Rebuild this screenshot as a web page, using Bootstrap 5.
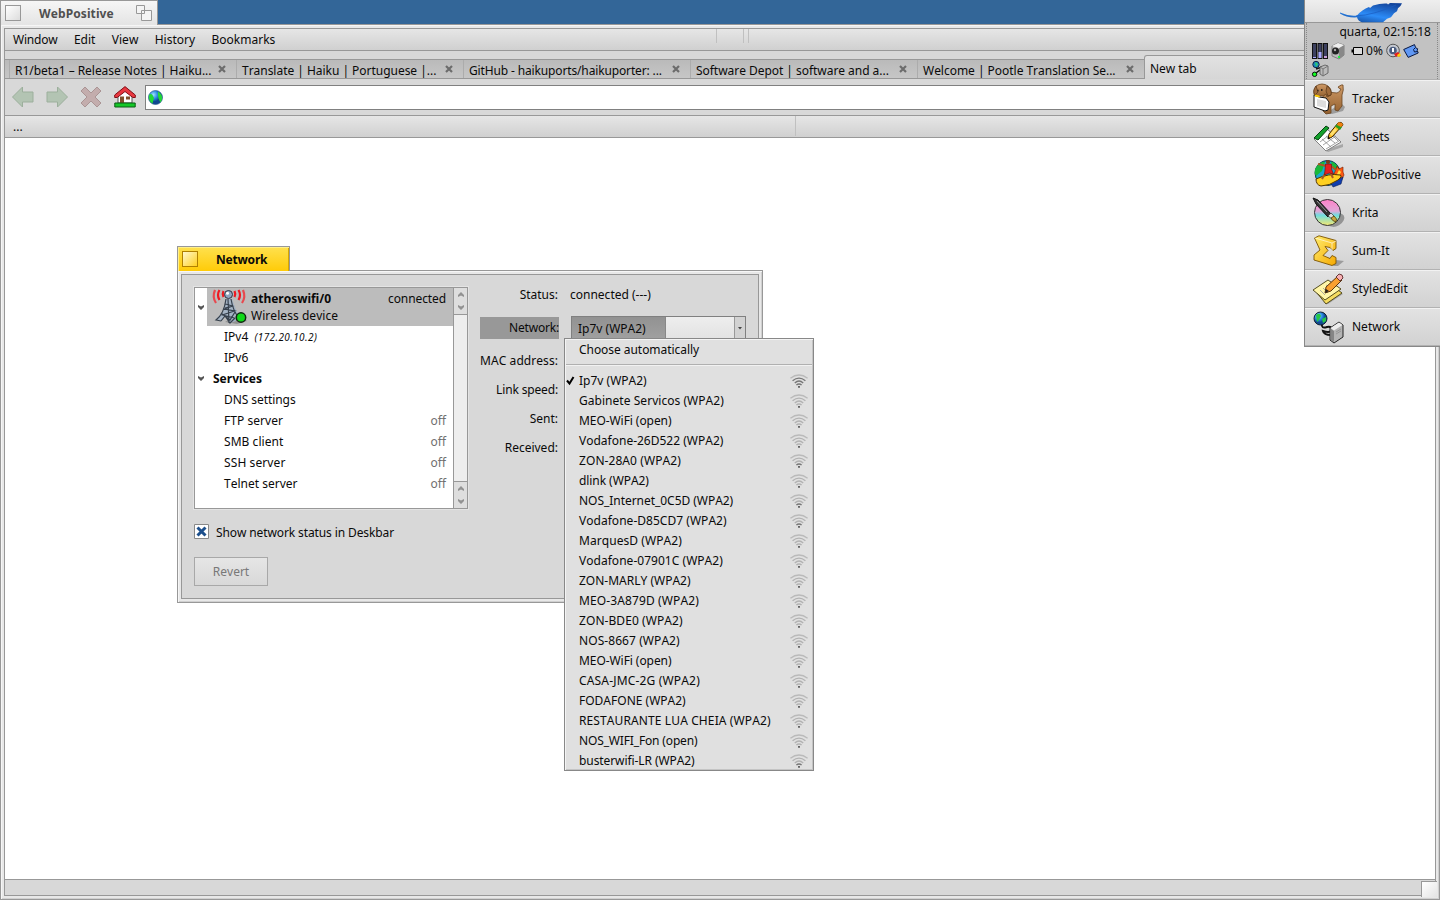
<!DOCTYPE html>
<html lang="en">
<head>
<meta charset="utf-8">
<title>Haiku desktop</title>
<link href="https://cdn.jsdelivr.net/npm/bootstrap@5.3.0/dist/css/bootstrap.min.css" rel="stylesheet">
<style>
body{width:1440px;height:900px;overflow:hidden;background:#336698;font:12px/20px "Noto Sans",sans-serif;color:#0a0a0a;position:relative;white-space:nowrap;font-kerning:none}
svg{display:block;flex:none;overflow:visible}
.line-t{border-top:1px solid #989898}.line-b{border-bottom:1px solid #989898}
.grad{background:linear-gradient(#e6e6e6,#d0d0d0)}
.win{position:absolute}
.frame{background:#e8e8e8;border:1px solid #989898;box-shadow:inset 1px 1px #f6f6f6,inset -1px -1px #d0d0d0;padding:3px}
.wp-tab{width:158px;height:25px;background:linear-gradient(#f6f6f6,#e4e4e4);border:1px solid #989898;border-bottom:0;z-index:1;color:#505050;font-weight:700}
.tbox{width:16px;height:16px;border:1px solid #989898;background:linear-gradient(135deg,#fff,#dcdcdc)}
.menu-bar{height:22px;gap:16.4px;padding-left:8px;position:relative}
.ghost{position:absolute;top:0;width:1px;height:14px;background:#c0c0c0}
.tabs{height:28px;background:#d8d8d8;padding-top:8px}
.tabstrip{height:20px;background:linear-gradient(#bababa,#c6c6c6);border-top:1px solid #989898;border-bottom:1px solid #989898;padding-left:4px}
.wtab{flex:none;width:227px;border-left:1px solid #acacac;padding:1px 9px 0 5px}
.wtab svg{margin-top:3px}
.wtab.active{width:300px;height:25px;margin-top:-5px;background:linear-gradient(#e2e2e2,#d6d6d6);border:1px solid #989898;border-bottom:0;border-radius:3px 0 0;padding:3px 5px 0;align-self:flex-start}
.toolrow{height:37px;background:#d8d8d8;padding-left:7px}
.url{height:25px;border:1px solid #808080;border-right:0;background:#fff;margin-left:9px;padding-left:2px;margin-top:1px}
.bookbar{height:22px;padding-left:8px;position:relative}
.net-tab{width:113px;height:25px;background:linear-gradient(#ffe14e,#ffcb08);border:1px solid #989898;border-bottom:0;box-shadow:inset 1px 1px #fff08a,inset -1px 0 #d8a800;z-index:1;font-weight:700}
.net-tab .tbox{border-color:#b08000;background:linear-gradient(135deg,#fff8d0,#ffd020)}
.tree{width:274px;height:222px;border:1px solid #989898;background:#fff;box-shadow:0 0 0 1px #e4e4e4}
.device{height:38px;background:#bcbcbc;line-height:17px}
.node{height:21px;line-height:22px;padding:0 7px 0 29px}
.off{color:#707070}
.sbar{width:14px;border-left:1px solid #989898;background:#eee}
.sbtn{height:27px;background:#dedede}
.popup{position:absolute;left:564px;top:338px;width:250px;height:433px;background:#e0e0e0;border:1px solid #888;box-shadow:inset 1px 1px #f4f4f4,inset -1px -1px #c4c4c4;z-index:5}
.item{height:20px;padding:0 5px 0 14px;position:relative}
.item>svg:last-child{margin-top:3px}
.item .tick{position:absolute;left:1px;top:5px}
.bar-sep{border-top:1px solid #b0b0b0;border-bottom:1px solid #f2f2f2;margin:4px 1px 5px}
.lbl{width:79px;text-align:right}
.dd{width:175px;height:24px;border:1px solid #808080;background:linear-gradient(#eee,#e2e2e2)}
.revert{width:74px;height:29px;border:1px solid #a8a8a8;background:linear-gradient(#e6e6e6,#d8d8d8);color:#787878}
.deskbar{position:absolute;left:1304px;top:0;width:137px;height:347px;border-left:1px solid #888;border-bottom:1px solid #888;z-index:6;background:#d8d8d8}
.leaf{height:23px;background:linear-gradient(#eee,#dcdcdc);border-bottom:1px solid #989898;padding-left:34px}
.tray{height:57px;background:#c2c2c2;border-bottom:1px solid #b0b0b0}
.dots{width:1px;border-left:1px dotted #888}
.app{height:38px;border-top:1px solid #f2f2f2;border-bottom:1px solid #b2b2b2;padding-left:8px;gap:7px;background:linear-gradient(#e2e2e2,#d2d2d2)}
</style>
</head>
<body>
<svg width="0" height="0" class="position-absolute">
<defs>
<linearGradient id="gold" x2="1" y2="1"><stop stop-color="#ffee70"/><stop offset="1" stop-color="#f5a800"/></linearGradient>
<linearGradient id="fur" x2="0" y2="1"><stop stop-color="#cf9a66"/><stop offset="1" stop-color="#93602f"/></linearGradient>
<linearGradient id="kr" x2="0" y2="1"><stop stop-color="#ff80c8"/><stop offset=".45" stop-color="#e0a8d8"/><stop offset=".6" stop-color="#70dce0"/><stop offset="1" stop-color="#f4e870"/></linearGradient>
<radialGradient id="sea" cx=".35" cy=".3"><stop stop-color="#a0e0ff"/><stop offset=".6" stop-color="#2888e0"/><stop offset="1" stop-color="#104890"/></radialGradient>
<linearGradient id="lf" x1=".2" y1="1" x2=".8" y2="0"><stop stop-color="#164c9c"/><stop offset=".4" stop-color="#2c8cf8"/><stop offset="1" stop-color="#12439a"/></linearGradient>
<symbol id="wifi" viewBox="0 0 18 14" fill="none" stroke-width="1.4"><path d="M.4 4.200Q9-2.200 17.600 4.200" stroke="#bababa"/><path d="M2.600 6.700Q9 1.500 15.400 6.700M4.800 9Q9 5.200 13.200 9" stroke="var(--a,#b2b2b2)"/><path d="M6.400 11Q9 9 11.600 11" stroke="var(--b,#b2b2b2)"/><path d="M8 12.900h2" stroke="#666" stroke-width="1.600"/></symbol>
<symbol id="x" viewBox="0 0 10 10"><path d="M2 2l6 6M8 2L2 8" stroke="#6c6c6c" stroke-width="2.2"/></symbol>
<symbol id="dn" viewBox="0 0 8 7"><path d="M1 1l3 1.500L7 1v2L4 6 1 3z" fill="currentColor"/></symbol>
<symbol id="up" viewBox="0 0 8 7"><path d="M1 6l3-1.500L7 6V4L4 1 1 4z" fill="currentColor"/></symbol>
<symbol id="globe" viewBox="0 0 16 16"><circle cx="7.500" cy="7.500" r="7" fill="url(#sea)" stroke="#306090" stroke-width=".7"/><path d="M1 5q2-2 3.500 0l1.500 3-1.500 5.500Q0 11 1 5M10 1.500q5 3 4 8l-1.500 3q-3-4-2.500-11z" fill="#22d838"/></symbol>
</defs>
</svg>

<!-- WebPositive browser window -->
<div class="win wp-tab d-flex align-items-center" style="left:0;top:0"><span class="tbox ms-1"></span><span style="margin-left:18px;padding-top:2px;letter-spacing:.1px">WebPositive</span>
<svg width="16" height="16" style="margin-left:22px" fill="#f4f4f4" stroke="#989898"><path d="M5.500 5.500h10v10h-10zM.5.5h8v8h-8z"/></svg></div>
<main class="win frame d-flex flex-column" style="left:0;top:24px;width:1440px;height:876px">
<div class="d-flex flex-column flex-grow-1" style="border:1px solid #989898">
<nav class="menu-bar grad d-flex align-items-center line-b"><span style="letter-spacing:-.2px">Window</span><span>Edit</span><span>View</span><span>History</span><span>Bookmarks</span><i class="ghost" style="left:711px"></i><i class="ghost" style="left:738px"></i><i class="ghost" style="left:743px"></i></nav>
<div class="tabs">
<div class="tabstrip d-flex">
<div class="wtab d-flex justify-content-between"><span style="letter-spacing:-.04px">R1/beta1 – Release Notes | Haiku...</span><svg width="10" height="10"><use href="#x"/></svg></div>
<div class="wtab d-flex justify-content-between"><span style="letter-spacing:-.03px">Translate | Haiku | Portuguese |...</span><svg width="10" height="10"><use href="#x"/></svg></div>
<div class="wtab d-flex justify-content-between"><span style="letter-spacing:-.14px">GitHub - haikuports/haikuporter: ...</span><svg width="10" height="10"><use href="#x"/></svg></div>
<div class="wtab d-flex justify-content-between"><span style="letter-spacing:-.04px">Software Depot | software and a...</span><svg width="10" height="10"><use href="#x"/></svg></div>
<div class="wtab d-flex justify-content-between"><span style="letter-spacing:-.03px">Welcome | Pootle Translation Se...</span><svg width="10" height="10"><use href="#x"/></svg></div>
<div class="wtab active" style="letter-spacing:-.05px">New tab</div>
</div></div>
<div class="toolrow d-flex align-items-center line-b">
<svg width="22" height="22" fill="#b3c4b3" stroke="#9caf9c"><path d="M.500 11L10.500 1v5H21v10H10.500v5z"/></svg>
<svg width="22" height="22" style="margin-left:12px" fill="#b3c4b3" stroke="#9caf9c"><path d="M21.500 11l-10-10v5H1v10h10.500v5z"/></svg>
<svg width="22" height="22" style="margin-left:12px" fill="#c3adad" stroke="#aa9494"><path d="M5 1l6 6 6-6 4 4-6 6 6 6-4 4-6-6-6 6-4-4 6-6-6-6z"/></svg>
<svg width="22" height="22" style="margin-left:12px"><path d="M4 9l7-6 7 6v8H4z" fill="#fff" stroke="#555"/><path d="M6 10.500h4V17H6z" fill="#80502c"/><path d="M12 10.500h4v3h-4z" fill="#80502c"/><path d="M.7 9L11 .6 21.300 9v2.500h-2.500L11 5.500 3.200 11.500H.7z" fill="#e83840" stroke="#801018"/><path d="M.8 17h20.400v4H.8z" fill="#14c828" stroke="#0a5c14"/></svg>
<div class="url flex-grow-1 d-flex align-items-center"><svg width="16" height="16"><use href="#globe"/></svg></div>
</div>
<div class="bookbar grad line-b d-flex align-items-center">...<i class="ghost" style="left:790px;height:20px;top:0"></i></div>
<div class="flex-grow-1 bg-white line-b"></div>
<div style="height:15px;background:#d8d8d8"></div>
</div>
</main>
<div class="win" style="left:1421px;top:881px;width:16px;height:16px;background:linear-gradient(135deg,#fff,#e4e4e4);border-left:1px solid #989898;border-top:1px solid #989898"></div>

<!-- Network preferences window -->
<div class="win net-tab d-flex align-items-center" style="left:177px;top:246px"><span class="tbox ms-1"></span><span style="margin-left:18px;padding-top:2px;letter-spacing:-.2px">Network</span></div>
<section class="win frame d-flex" style="left:177px;top:270px;width:586px;height:333px">
<div class="d-flex flex-grow-1" style="border:1px solid #989898;background:#d8d8d8;padding:12px 12px 0">
<div>
<div class="tree d-flex">
<div class="flex-grow-1">
<div class="d-flex"><div style="width:12px;padding:16px 0 0 2px;color:#555"><svg width="8" height="7"><use href="#dn"/></svg></div>
<div class="device flex-grow-1 d-flex" style="padding:2px 7px 0 6px">
<svg width="33" height="34"><path d="M12 32l14-8 8 7-10 3z" fill="#777" opacity=".6"/><g fill="none" stroke="#f01820" stroke-width="2.200"><path d="M10.500 1q-1.500 3 0 6M6.500 0q-3 5 0 10"/><path d="M2 0q-3 7 1 13" stroke="#e8484e"/><path d="M21.500 1q1.500 3 0 6M25.500 0q3 5 0 10"/><path d="M30 0q3 7-1 13" stroke="#e8484e"/></g><path d="M13 9L10 22 3 29l5 2 4-5 5 7 6-2-1-6 4 1-4-9-3-8z" fill="#a4b3c4"/><path d="M13 9Q11 24 3 30l5 1M15 9l1 24M18 9q2 12 8 19M12.500 14l7 2-8 3 10 2-12 4 12 3M12 18l8-2M8 23l9 7 5-8M8 31l4-5 5 7 5-5" fill="none" stroke="#36404c" stroke-width="1.200"/><circle cx="15.500" cy="4.500" r="4" fill="#8fa6bf" stroke="#334"/><circle cx="14.500" cy="3.300" r="1.500" fill="#fff"/><circle cx="28" cy="27.500" r="4.700" fill="#10d818" stroke="#102810" stroke-width="1.500"/></svg>
<div class="flex-grow-1" style="margin-left:5px"><div class="d-flex justify-content-between"><b>atheroswifi/0</b><span style="letter-spacing:-.1px">connected</span></div><div style="letter-spacing:.05px">Wireless device</div></div>
</div></div>
<div class="node">IPv4 <i style="font-size:10px;margin-left:3px;letter-spacing:.4px">(172.20.10.2)</i></div>
<div class="node">IPv6</div>
<div class="node d-flex align-items-center" style="padding-left:2px"><svg width="8" height="7" style="color:#555"><use href="#dn"/></svg><b style="margin-left:8px;line-height:20px">Services</b></div>
<div class="node" style="letter-spacing:-.07px">DNS settings</div>
<div class="node d-flex justify-content-between"><span style="letter-spacing:.05px">FTP server</span><span class="off">off</span></div>
<div class="node d-flex justify-content-between"><span style="letter-spacing:.05px">SMB client</span><span class="off">off</span></div>
<div class="node d-flex justify-content-between"><span style="letter-spacing:.1px">SSH server</span><span class="off">off</span></div>
<div class="node d-flex justify-content-between"><span>Telnet server</span><span class="off">off</span></div>
</div>
<div class="sbar d-flex flex-column justify-content-between" style="color:#929292">
<div class="sbtn line-b d-flex flex-column align-items-center justify-content-around"><svg width="8" height="7"><use href="#up"/></svg><svg width="8" height="7"><use href="#dn"/></svg></div>
<div class="sbtn line-t d-flex flex-column align-items-center justify-content-around"><svg width="8" height="7"><use href="#up"/></svg><svg width="8" height="7"><use href="#dn"/></svg></div>
</div>
</div>
<div class="d-flex align-items-start" style="margin-top:14px"><svg width="15" height="15" style="margin-top:1px"><path d="M.5.5h14v14H.5z" fill="#fff" stroke="#888"/><path d="M3.500 3.500l8 8m0-8l-8 8" stroke="#1c4f8c" stroke-width="3"/></svg><span style="margin-left:7px;letter-spacing:-.11px">Show network status in Deskbar</span></div>
<div class="revert d-flex align-items-center justify-content-center" style="margin-top:14px">Revert</div>
</div>
<div style="margin-left:12px">
<div class="d-flex" style="margin-top:-2px"><div class="lbl" style="padding-right:1px">Status:</div><div style="margin-left:11px">connected (---)</div></div>
<div class="d-flex" style="margin-top:11px"><div class="lbl" style="background:#989898;height:22px;line-height:22px;margin-top:1px;letter-spacing:-.2px">Network:</div><div class="dd d-flex" style="margin-left:12px"><div style="width:94px;background:linear-gradient(#929292,#a0a0a0);border-right:1px solid #888;padding:2px 0 0 6px">Ip7v (WPA2)</div><div class="flex-grow-1"></div><div class="d-flex align-items-center justify-content-center" style="width:11px;border-left:1px solid #999;background:#d2d2d2"><svg width="4" height="3"><path d="M0 0h4L2 2.500z" fill="#444"/></svg></div></div></div>
<div class="lbl" style="margin-top:11px;padding-right:1px;letter-spacing:.06px">MAC address:</div>
<div class="lbl" style="margin-top:9px;padding-right:1px;letter-spacing:-.15px">Link speed:</div>
<div class="lbl" style="margin-top:9px;padding-right:1px">Sent:</div>
<div class="lbl" style="margin-top:9px;padding-right:1px">Received:</div>
</div>
</div>
</section>

<!-- Wireless network menu -->
<div class="popup">
<div class="item" style="margin-top:1px;letter-spacing:-.05px">Choose automatically</div>
<div class="bar-sep"></div>
<div id="networks"></div>
</div>

<!-- Deskbar -->
<aside class="deskbar">
<div class="leaf"><svg width="66" height="22"><path d="M1 12.500q9 4 17 3 5-6 12-8.500l1 1 3-2.500q8-2.500 14-2l1 1 2-1.500q6 0 12 .3-1 3-4 5l-1 3-3 2-3 4-4 1.500-4 3.500H23q-4-1-5-5Q8 18 1 13.500z" fill="url(#lf)"/><path d="M17 16q18-1 40-11" stroke="#1a5cc0" stroke-width=".7" fill="none"/></svg></div>
<div class="tray d-flex"><div class="dots" style="margin-left:1px"></div>
<div class="flex-grow-1" style="padding-left:5px">
<div class="text-end" style="height:19px;line-height:18px;padding-right:6px">quarta, 02:15:18</div>
<div class="d-flex align-items-center" style="height:18px">
<svg width="16" height="16"><path d="M0 0h5v16H0zM5.500 0h5v16h-5zM11 0h5v16h-5z" fill="#111"/><path d="M1 1h3v14H1zM6.500 1h3v14h-3zM12 1h3v14h-3z" fill="#3c4060"/><path d="M6.500 9h3v6h-3zM1 14h3v1H1z" fill="#a8a8ff"/><path d="M12 13h3v2h-3z" fill="#c8a0d8"/></svg>
<svg width="14" height="16" style="margin-left:3px"><path d="M1 3l6-3 6 2v10l-5 4-7-3z" fill="#bbb" stroke="#666" stroke-width=".7"/><path d="M8 5l5-3v10l-5 4z" fill="#888"/><path d="M1 3l6-3 6 2-5 3z" fill="#eee"/><circle cx="4.500" cy="8" r="3.500" fill="#222"/><circle cx="4" cy="7" r="1.200" fill="#aaa"/><path d="M7 13h2v2H7z" fill="#2e4"/></svg>
<svg width="12" height="8" style="margin-left:6px"><path d="M2.500.5h9v7h-9z" fill="#ddd" stroke="#000"/><path d="M.5 2.500h1.500v3H.5z"/></svg>
<span style="margin-left:3px;letter-spacing:.1px">0%</span>
<svg width="16" height="16" style="margin-left:3px"><path d="M4 2h8l2 12H5z" fill="#999"/><circle cx="7" cy="7.500" r="6.300" fill="#c4c8d0" stroke="#555"/><circle cx="7" cy="7.500" r="3.800" fill="#4b5d80"/><path d="M6 5h2v4H6z" fill="#fff"/><path d="M8 11l4-2 2 2-4 3z" fill="#e02020"/><path d="M11 12l3-2 1 3-3 1z" fill="#fc0"/></svg>
<svg width="16" height="14" style="margin-left:1px"><path d="M.700 5.500L11.500.6l1.200 3.200 2 1-.5 1.500 1 2.700-10 4.400z" fill="#6098f4" stroke="#0a1840"/><path d="M12 4l-1.500 1.500 1 2.500 3-.5" fill="none" stroke="#0a1840"/></svg>
</div>
<svg width="16" height="16" style="margin-top:1px"><path d="M4 8l6-2M4 12l4-3" stroke="#111" stroke-width="1.500"/><circle cx="4" cy="3.500" r="3.200" fill="#188ac0" stroke="#124"/><path d="M3 1l3 2-2 3z" fill="#3c6"/><path d="M8 6l5-2 3 1v7l-5 3-3-2z" fill="#bbb" stroke="#555" stroke-width=".8"/><path d="M8 6l3 2v7M11 8l5-3" stroke="#777" fill="none"/><circle cx="2.600" cy="13.300" r="2.200" fill="#1f2" stroke="#111"/></svg>
</div><div class="dots" style="margin-right:3px"></div></div>
<div class="app d-flex align-items-center"><svg width="32" height="32"><path d="M12 31l16-11 4 4-2 4-11 3z" fill="#777" opacity=".6"/><path d="M14 9l10 1q3-1 4-4-2 0-3-2 4-3 5-2 1 5-1 10v11l-4 5-3-1v-6l-4 2v7l-5 1-3-3 1-9-3-3z" fill="url(#fur)" stroke="#6a4420" stroke-width=".8"/><path d="M3 3q6-4 12 0 4 3 3 9l-4 2-1-3-3 2H5l-2 1Q0 12 1 7z" fill="url(#fur)" stroke="#6a4420" stroke-width=".8"/><path d="M3 3Q-1 8 2 12l3-3zM14 3q5 3 4 9l-3 1-2-5z" fill="#a06c3c" stroke="#4a2c10" stroke-width=".6"/><path d="M8 7h1.500M4.500 7.500h1" stroke="#111" stroke-width="1.500"/><path d="M1 12l5 2 7 1 3 4-1 8-3 1-11-4z" fill="#fff" stroke="#111"/><path d="M1.500 11.500l5 1 .5 2-5-1z" fill="#fc0"/><path d="M4 16l9 2v7l-9-2z" fill="#ddd"/></svg>Tracker</div>
<div class="app d-flex align-items-center"><svg width="32" height="32"><path d="M12 29l18-6v3l-15 5z" fill="#777" opacity=".5"/><path d="M1 18L12 6l16 15-15 9z" fill="#fff" stroke="#666" stroke-width=".8"/><path d="M1 17L13 5l3 2L5 19z" fill="#14a02c" stroke="#064010"/><path d="M7 21l13-10M10 24l13-9M13 28l13-8M9 18l9 8M13 15l9 7M17 12l8 8" stroke="#8c8c8c" stroke-width=".8" fill="none"/><path d="M15 18l1-5L25 2q4-2 5 2L19 16z" fill="#ffc020" stroke="#3c2400"/><path d="M22 5.500l2-2.500 5 3-2 3z" fill="#2c9c20"/><path d="M17 13l5-6 2 2-5 6z" fill="#ffe070"/><path d="M25 1.500q4-1 5 2.500l-2 2-4-2z" fill="#f08010"/><path d="M15 18l.5-2.500L17 17z"/></svg>Sheets</div>
<div class="app d-flex align-items-center"><svg width="32" height="32"><circle cx="14.500" cy="14" r="12.500" fill="#19a9d0" stroke="#083050"/><path d="M4 7q5-5 8-4l-3 9-6 5q-3-5 1-10M18 2.500q7 2 8 9l-6-2z" fill="#19b83a"/><path d="M20 18l4-11 2 3 4-2v5l1 3-3 6-8 4z" fill="#fd5810" stroke="#701800" stroke-width=".6"/><path d="M23 17l3-6 2 2-3 6z" fill="#ffe040"/><path d="M18 24l12-6-2 7-8 3z" fill="#103eb0" stroke="#081c50" stroke-width=".6"/><path d="M3 20Q16 14 27 16q3 1-2 5-9 6-17 6-5-1-5-7" fill="#ffd020" stroke="#513400"/><path d="M13 7l-8-2M18 7l5 4M13 13l-4 7M17 13l3 6" stroke="#a85a28" stroke-width="2" fill="none"/><path d="M12.500 5h6v5l2 5-4-1-5 2z" fill="#e52020" stroke="#600" stroke-width=".5"/><circle cx="15" cy="3" r="2.100" fill="#7c3c18"/></svg>WebPositive</div>
<div class="app d-flex align-items-center"><svg width="32" height="32"><ellipse cx="23" cy="23" rx="9" ry="6" fill="#777" opacity=".7" transform="rotate(-30 23 23)"/><circle cx="14.500" cy="15.500" r="13" fill="url(#kr)" stroke="#333"/><path d="M0 1l5 2 13 14-3 3L3 7z" fill="#333" stroke="#111"/><path d="M4 4l10 11" stroke="#999"/><path d="M15 19l3-3 3 3-2 3z" fill="#ddd" stroke="#333" stroke-width=".7"/><path d="M18 21l3-2q4 3 2 6-4-1-5-4" fill="#c8a840" stroke="#443000" stroke-width=".7"/></svg>Krita</div>
<div class="app d-flex align-items-center"><svg width="32" height="32"><path d="M20 31l3-6 8 1-6 5z" fill="#777" opacity=".6"/><path d="M1.500 3L6 .8l17 4.700v8l-3 2-3-3-5-1 3 4-5 5 7 3 2-3 4 2v6l-4 2L1 25v-5l6-5z" fill="url(#gold)" stroke="#7c5200" stroke-width=".9"/><path d="M2 3l17 5 4-2M19 8v7" fill="none" stroke="#fff" opacity=".6"/></svg>Sum-It</div>
<div class="app d-flex align-items-center"><svg width="32" height="32"><path d="M10 29l17-10 3 2-15 10z" fill="#777" opacity=".5"/><path d="M4 20l17-6 8 6-16 11z" fill="#f5dc60" stroke="#443c10" stroke-width=".9"/><path d="M0 17L15 7l13 9-16 11z" fill="#fff6a8" stroke="#443c10" stroke-width=".9"/><path d="M7 17l5 5M10 15l5 5M13 12l3 2" stroke="#999" stroke-width=".8"/><path d="M12 20l1-6L25 3l4 4-11 11z" fill="#f8a030" stroke="#482400" stroke-width=".9"/><path d="M23 4l3-3q4 0 4 4l-3 3z" fill="#f8b0b4" stroke="#582828" stroke-width=".9"/><path d="M12 20l1-4 3 2z" fill="#222"/></svg>StyledEdit</div>
<div class="app d-flex align-items-center"><svg width="32" height="32"><path d="M9 13q-1 5 5 3 6-1 4 4-2 2-8 0 1 4 8 4" fill="none" stroke="#111" stroke-width="2"/><circle cx="7.500" cy="7.500" r="6.500" fill="url(#sea)" stroke="#123"/><path d="M3 4q4-3 5 1l-2 4-2 2zM9 8l4-2v4l-3 2z" fill="#26c846"/><path d="M17 17l9-6 4 3v12l-9 6-4-3z" fill="#b4b4b4" stroke="#222"/><path d="M17.500 17.500l3.500 2.500v11l-3.500-2.500z" fill="#858585"/><path d="M17.500 17l3.500 2.500 8.500-5.500L26 11.500z" fill="#eee"/><path d="M23 21l5-3M23 23l5-3" stroke="#888" stroke-width=".7"/></svg>Network</div>
</aside>
<script src="https://cdn.jsdelivr.net/npm/bootstrap@5.3.0/dist/js/bootstrap.bundle.min.js"></script>
<script>
// name, number of lit arcs, letter spacing in px
const networks = [
  ["Ip7v (WPA2)", 3, 0], ["Gabinete Servicos (WPA2)", 0, .04], ["MEO-WiFi (open)", 0, -.07],
  ["Vodafone-26D522 (WPA2)", 0, 0], ["ZON-28A0 (WPA2)", 1, .07], ["dlink (WPA2)", 0, -.07],
  ["NOS_Internet_0C5D (WPA2)", 1, -.04], ["Vodafone-D85CD7 (WPA2)", 1, .03], ["MarquesD (WPA2)", 0, .06],
  ["Vodafone-07901C (WPA2)", 0, .03], ["ZON-MARLY (WPA2)", 0, 0], ["MEO-3A879D (WPA2)", 0, .12],
  ["ZON-BDE0 (WPA2)", 0, .07], ["NOS-8667 (WPA2)", 0, .07], ["MEO-WiFi (open)", 0, -.07],
  ["CASA-JMC-2G (WPA2)", 0, .17], ["FODAFONE (WPA2)", 0, 0], ["RESTAURANTE LUA CHEIA (WPA2)", 0, .11],
  ["NOS_WIFI_Fon (open)", 0, -.15], ["busterwifi-LR (WPA2)", 1, -.08]
];
const tick = '<svg class="tick" width="9" height="9"><path d="M1 4.500l2.500 3L7.500 1" fill="none" stroke="#000" stroke-width="2"/></svg>';
document.getElementById("networks").innerHTML = networks.map(([name, lit, ls], i) =>
  `<div class="item d-flex justify-content-between" style="${lit > 1 ? "--a:#777;" : ""}${lit ? "--b:#777" : ""}">${i ? "" : tick}<span style="letter-spacing:${ls}px">${name}</span><svg width="18" height="14"><use href="#wifi"/></svg></div>`).join("");
</script>
</body>
</html>
